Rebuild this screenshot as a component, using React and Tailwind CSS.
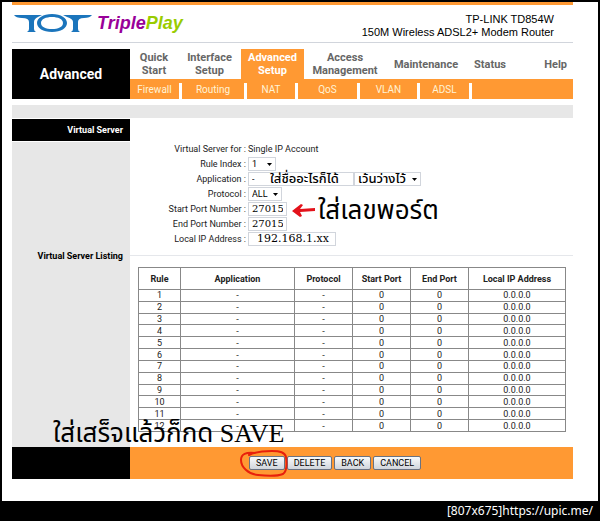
import { useState } from "react";

const tabs = [
  { label: ["Quick", "Start"], width: "w-12" },
  { label: ["Interface", "Setup"], width: "w-[63px]" },
  { label: ["Advanced", "Setup"], width: "w-[63px]" },
  { label: ["Access", "Management"], width: "w-[82px]" },
  { label: ["Maintenance"], width: "w-20" },
  { label: ["Status"], width: "w-12" },
  { label: ["Help"], width: "flex-1" },
];

const subTabs = [
  { label: "Firewall", width: "w-[49px]" },
  { label: "Routing", width: "w-[62px]" },
  { label: "NAT", width: "w-12" },
  { label: "QoS", width: "w-[59px]" },
  { label: "VLAN", width: "w-[57px]" },
  { label: "ADSL", width: "w-[49px]" },
];

const columns = [
  { label: "Rule", width: "w-[42px]" },
  { label: "Application", width: "w-[114px]" },
  { label: "Protocol", width: "w-[58px]" },
  { label: "Start Port", width: "w-[58px]" },
  { label: "End Port", width: "w-[58px]" },
  { label: "Local IP Address", width: "w-auto" },
];

const rules = Array.from({ length: 12 }, (_, i) => i + 1);

const fieldClass = "h-[14px] border border-gray-300 bg-white px-[3px] leading-3 text-black outline-none";

function Logo() {
  return (
    <div className="flex items-center">
      <svg width="78" height="19" viewBox="0 0 78 19" role="img" aria-label="TOT" fill="#1b75bc">
        <path d="M0 1h28l-4 2q-4 2-4 5v7q0 2 2 3h-9q2-1 2-3V8q0-4-7-4Q2 4 0 1z" />
        <path d="M78 1H49l4 2q6 2 6 5v7q0 2-2 3h9q-2-1-2-3V8q0-4 6-4 6 0 8-3z" />
        <path
          fillRule="evenodd"
          d="M38 0c9 0 15 4 15 9s-6 9-15 9-15-4-15-9 6-9 15-9zm0 3c-6 0-11 2-11 6s5 6 11 6 11-2 11-6-5-6-11-6z"
        />
      </svg>
      <p className="ml-[5px] text-[18px] font-bold italic leading-5 text-[#990099]">
        Triple<span className="text-[#99cc00]">Play</span>
      </p>
    </div>
  );
}

function Row({ label, id, children }) {
  return (
    <div className="flex h-[15px] items-center">
      <label htmlFor={id} className="w-[116px] shrink-0 text-right">
        {label} :
      </label>
      <div className="relative ml-[2px] flex items-center">{children}</div>
    </div>
  );
}

function Picker({ id, value, options, className }) {
  const [selected, setSelected] = useState(value);
  return (
    <div className="relative">
      <select
        id={id}
        value={selected}
        aria-label={id}
        onChange={(event) => setSelected(event.target.value)}
        className={`${fieldClass} appearance-none ${className}`}
      >
        {options.map((option) => (
          <option key={option}>{option}</option>
        ))}
      </select>
      <svg width="5" height="3" viewBox="0 0 5 3" className="pointer-events-none absolute right-1 top-[6px]">
        <path d="M0 0h5L2.5 3z" />
      </svg>
    </div>
  );
}

function ActionButton({ children }) {
  return (
    <button
      type="button"
      className="h-[14px] rounded-xs border border-gray-500 bg-linear-to-b from-gray-50 to-gray-300 px-[6px] font-['Roboto',sans-serif] text-[9px] leading-3 text-black"
    >
      {children}
    </button>
  );
}

function App() {
  const [tab, setTab] = useState("Advanced Setup");

  return (
    <div className="flex min-h-screen flex-col bg-black px-[2px] pt-[2px] font-['Roboto','Noto_Sans_Thai',sans-serif] text-[9px] leading-3 text-[#222]">
      <div className="bg-white pb-[22px] pl-[10px] pr-[25px]">
        <header className="flex h-[41px] justify-between border-b border-gray-300 border-t-[3px] border-t-[#ff9933] font-['Liberation_Sans',sans-serif]">
          <div className="pl-[2px] pt-2">
            <Logo />
          </div>
          <div className="pr-[19px] pt-2 text-right text-[11px] leading-[13px] text-black">
            <p>TP-LINK TD854W</p>
            <p>150M Wireless ADSL2+ Modem Router</p>
          </div>
        </header>

        <div className="mt-[6px] flex">
          <h1 className="flex h-[50px] w-[118px] shrink-0 items-center justify-center bg-black text-[14px] font-bold text-white">
            Advanced
          </h1>
          <div className="flex flex-1 flex-col">
            <nav className="flex h-[30px] text-[11px] font-bold leading-[13px]">
              {tabs.map(({ label, width }) => {
                const name = label.join(" ");
                return (
                  <a
                    key={name}
                    href="#"
                    onClick={() => setTab(name)}
                    className={`flex flex-col justify-center text-center ${width} ${
                      name === "Help" ? "items-end pr-[6px]" : "items-center"
                    } ${tab === name ? "bg-[#ff9933] text-white" : "text-[#666]"}`}
                  >
                    {label.map((line) => (
                      <span key={line}>{line}</span>
                    ))}
                  </a>
                );
              })}
            </nav>
            <nav className="flex h-5 gap-[3px] bg-[#ff9933] text-[10px] text-[#fff3d6]">
              {subTabs.map(({ label, width }) => (
                <a
                  key={label}
                  href="#"
                  className={`relative flex items-center justify-center pt-[2px] after:absolute after:-right-[3px] after:bottom-0 after:h-4 after:w-[3px] after:bg-white ${width}`}
                >
                  {label}
                </a>
              ))}
            </nav>
          </div>
        </div>

        <main className="relative mt-[6px]">
          <div className="h-[14px] border-b border-white bg-[#e7e7e7]" />
          <div className="flex">
            <aside className="w-[118px] shrink-0 bg-[#e7e7e7] text-right text-[9px] font-bold">
              <h2 className="border-b border-white bg-black py-[5px] pr-[7px] leading-3 text-white">Virtual Server</h2>
              <h2 className="mt-[108px] pr-[7px] text-black">Virtual Server Listing</h2>
            </aside>

            <div className="flex-1">
              <form className="border-b border-gray-200 pb-[9px] pt-[22px]">
                <Row label="Virtual Server for">
                  <span>Single IP Account</span>
                </Row>
                <Row label="Rule Index" id="rule">
                  <Picker id="rule" value="1" options={rules} className="w-7" />
                </Row>
                <Row label="Application" id="application">
                  <input id="application" defaultValue="-" className={`${fieldClass} w-[106px]`} />
                  <Picker
                    id="preset"
                    value="เว้นว่างไว้"
                    options={["เว้นว่างไว้"]}
                    className="w-[67px] text-[13px] font-medium"
                  />
                  <span className="pointer-events-none absolute left-[22px] whitespace-nowrap text-[13px] font-medium text-black">
                    ใส่ชื่ออะไรก็ได้
                  </span>
                </Row>
                <Row label="Protocol" id="protocol">
                  <Picker id="protocol" value="ALL" options={["ALL", "TCP", "UDP"]} className="w-[34px]" />
                </Row>
                <Row label="Start Port Number" id="start-port">
                  <input
                    id="start-port"
                    defaultValue="27015"
                    className={`${fieldClass} w-[39px] font-['DejaVu_Serif',serif] text-[10px]`}
                  />
                  <div className="pointer-events-none absolute left-11 top-0 flex items-center text-black">
                    <svg width="24" height="14" viewBox="0 0 24 14" fill="#e3121b">
                      <path d="M0 8 9 1l2 1-3 4 15-1v3L8 9l2 4-2 1z" />
                    </svg>
                    <span className="ml-[2px] whitespace-nowrap text-[26px] leading-4">ใส่เลขพอร์ต</span>
                  </div>
                </Row>
                <Row label="End Port Number" id="end-port">
                  <input
                    id="end-port"
                    defaultValue="27015"
                    className={`${fieldClass} w-[39px] font-['DejaVu_Serif',serif] text-[10px]`}
                  />
                </Row>
                <Row label="Local IP Address" id="ip">
                  <input
                    id="ip"
                    defaultValue="192.168.1.xx"
                    className={`${fieldClass} w-[88px] pl-2 font-['DejaVu_Serif',serif] text-[11px] font-medium`}
                  />
                </Row>
              </form>

              <div className="pb-[15px] pl-2 pr-[7px] pt-[11px]">
                <table className="h-[165px] w-full table-fixed border-collapse text-center leading-[10px]">
                  <thead>
                    <tr className="h-[22px]">
                      {columns.map(({ label, width }) => (
                        <th key={label} className={`border border-[#888] p-0 ${width}`}>
                          {label}
                        </th>
                      ))}
                    </tr>
                  </thead>
                  <tbody>
                    {rules.map((rule) => (
                      <tr key={rule}>
                        <td className="border border-[#888] p-0">{rule}</td>
                        <td className="border border-[#888] p-0">-</td>
                        <td className="border border-[#888] p-0">-</td>
                        <td className="border border-[#888] p-0">0</td>
                        <td className="border border-[#888] p-0">0</td>
                        <td className="border border-[#888] p-0">0.0.0.0</td>
                      </tr>
                    ))}
                  </tbody>
                </table>
              </div>
            </div>
          </div>

          <div className="flex h-8 bg-[#ff9933]">
            <div className="w-[118px] bg-black" />
            <div className="relative flex items-center gap-[2px] pl-[119px]">
              <ActionButton>SAVE</ActionButton>
              <ActionButton>DELETE</ActionButton>
              <ActionButton>BACK</ActionButton>
              <ActionButton>CANCEL</ActionButton>
              <svg
                width="50"
                height="30"
                viewBox="0 0 50 30"
                fill="none"
                stroke="#e8200c"
                strokeWidth="2"
                strokeLinecap="round"
                className="pointer-events-none absolute left-[109px] top-[1px]"
              >
                <path d="M16 5C7 4 2 6 2 12c0 7 7 14 17 15 9 1 20 1 25-1 4-3 4-10 3-17-1-5-6-6-14-6-9 0-17 1-23 4" />
              </svg>
            </div>
          </div>
          <p className="pointer-events-none absolute bottom-[31px] left-[41px] whitespace-nowrap font-['Liberation_Serif','Noto_Sans_Thai',serif] text-[26px] leading-7 text-black">
            ใส่เสร็จแล้วก็กด SAVE
          </p>
        </main>
      </div>
      <footer className="pr-[5px] text-right font-['Noto_Sans',sans-serif] text-[12px] leading-5 text-white">
        [807x675]<a href="https://upic.me/">https://upic.me/</a>
      </footer>
    </div>
  );
}

export default App;
